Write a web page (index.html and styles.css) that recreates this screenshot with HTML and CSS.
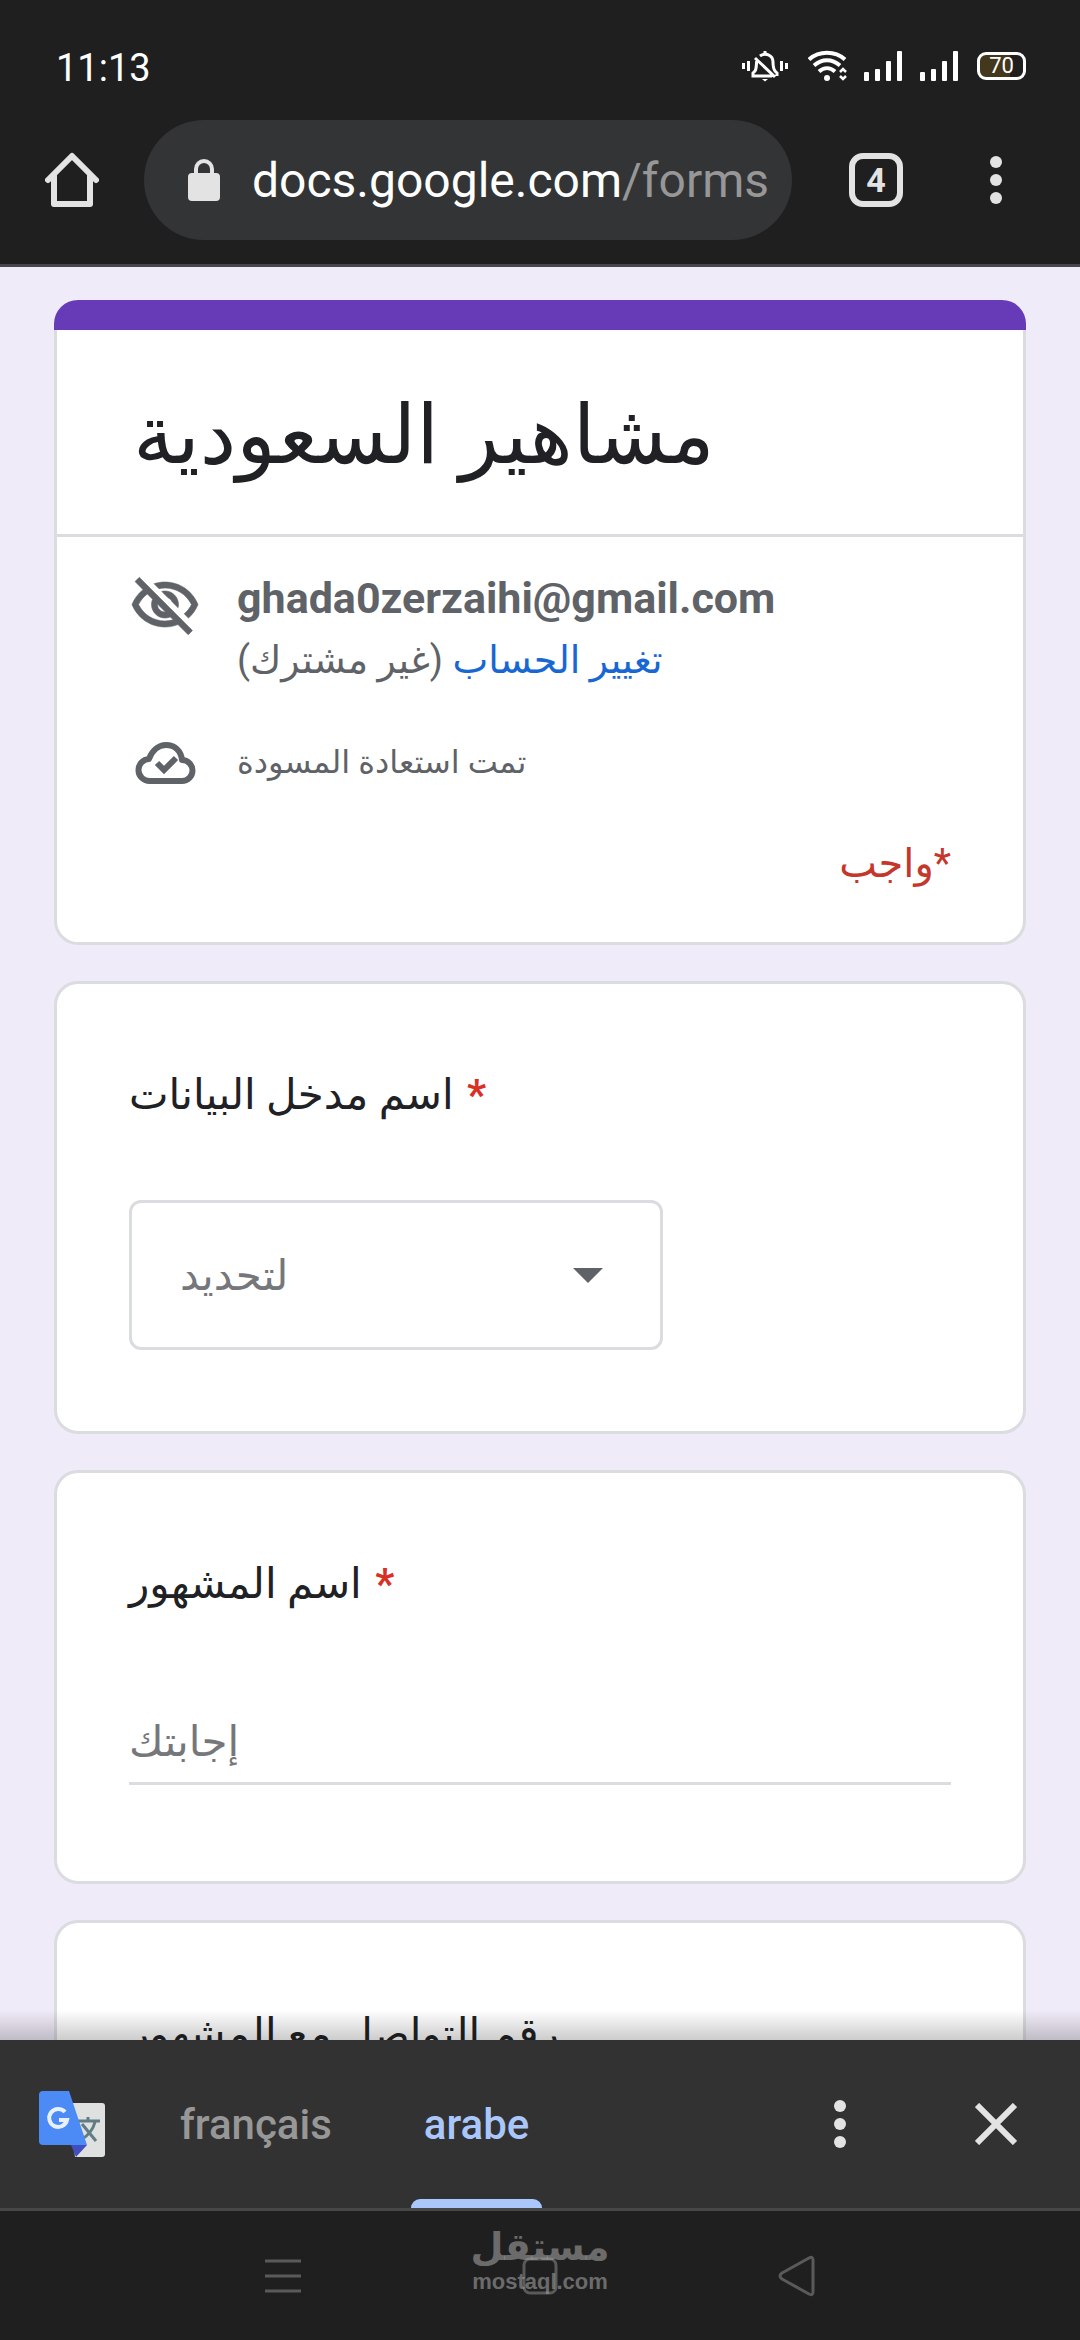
FILE: index.html
```
<!DOCTYPE html>
<html lang="ar">
<head>
    <meta charset="UTF-8">
    <meta name="viewport" content="width=device-width, initial-scale=1.0">
    <title>مشاهير السعودية</title>
    <link rel="stylesheet" href="styles.css">
</head>
<body>
    <header class="browser">
        <div class="status">
            <time class="clock">11:13</time>
            <div class="status-icons">
                <svg class="bell" width="46" height="32" viewBox="0 0 46 32" fill="none" stroke="#fff" stroke-width="3">
                    <path d="M1.500 13v6M6.500 11v10M39.500 11v10M44.500 13v6"/>
                    <path d="M23 1v4M15 9c-1 4 0 9-2 12l-2 2v3h19M18 6c5-4 13-1 13 6 0 4 0 6 2 9l2 2v3M13 8l20 19"/>
                    <path d="M20 29h6l-3 2.500z" fill="#fff" stroke="none"/>
                </svg>
                <svg class="wifi" width="40" height="32" viewBox="0 0 40 32" fill="none" stroke="#fff" stroke-width="4">
                    <path d="M1 9.500c10-9 26-9 36 0M6 15.500c8-7 18-7 26 0M11 21.500c5-4.500 11-4.500 16 0"/>
                    <circle cx="19" cy="28" r="3" fill="#fff" stroke="none"/>
                    <path d="M32 22l3-3 3 3M32 26l3 3 3-3" stroke-width="2.500"/>
                </svg>
                <svg class="signal" width="38" height="32" viewBox="0 0 38 32" fill="#fff">
                    <rect x="0" y="22" width="5" height="9" rx="1"/><rect x="11" y="19" width="5" height="12" rx="1"/><rect x="22" y="11" width="5" height="20" rx="1"/><rect x="33" y="1" width="5" height="30" rx="1"/>
                </svg>
                <svg class="signal" width="38" height="32" viewBox="0 0 38 32" fill="#fff">
                    <rect x="0" y="22" width="5" height="9" rx="1"/><rect x="11" y="19" width="5" height="12" rx="1"/><rect x="22" y="11" width="5" height="20" rx="1"/><rect x="33" y="1" width="5" height="30" rx="1"/>
                </svg>
                <span class="battery">70</span>
            </div>
        </div>
        <div class="toolbar">
            <button class="icon-btn" aria-label="Accueil">
                <svg width="54" height="56" viewBox="0 0 54 56" fill="none" stroke="#e3e3e3" stroke-width="6" stroke-linecap="round" stroke-linejoin="round">
                    <path d="M3 28L27 4l24 24" /><path d="M9 24v28h36V24" />
                </svg>
            </button>
            <a class="url" href="#">
                <svg width="32" height="42" viewBox="0 0 32 42">
                    <rect y="14" width="32" height="28" rx="4" fill="#e3e3e3"/>
                    <path d="M8 16v-6a8 8 0 0 1 16 0v6" fill="none" stroke="#e3e3e3" stroke-width="4"/>
                </svg>
                <span>docs.google.com<span class="url-path">/forms</span></span>
            </a>
            <button class="tabs">4</button>
            <button class="icon-btn" aria-label="Menu">
                <svg width="12" height="48" viewBox="0 0 12 48" fill="#e3e3e3">
                    <circle cx="6" cy="6" r="6"/><circle cx="6" cy="24" r="6"/><circle cx="6" cy="42" r="6"/>
                </svg>
            </button>
        </div>
    </header>

    <main class="page">
        <section class="card intro">
            <h1>مشاهير السعودية</h1>
            <div class="account">
                <svg width="72" height="72" viewBox="0 0 24 24" fill="#5f6368" stroke="#5f6368" stroke-width=".2">
                    <path d="M12 6c3.790 0 7.170 2.130 8.820 5.500-.59 1.220-1.420 2.270-2.410 3.120l1.410 1.410c1.390-1.230 2.490-2.770 3.180-4.530C21.270 7.110 17 4 12 4c-1.270 0-2.490.2-3.640.57l1.650 1.650C10.660 6.090 11.320 6 12 6zm-1.070 1.140L13 9.210c.57.25 1.030.71 1.280 1.280l2.070 2.070c.08-.34.14-.7.14-1.070C16.500 9.010 14.480 7 12 7c-.37 0-.72.05-1.070.14zM2.010 3.870l2.680 2.680C3.060 7.830 1.770 9.530 1 11.500 2.730 15.890 7 19 12 19c1.520 0 2.980-.29 4.320-.82l3.420 3.420 1.410-1.410L3.420 2.450 2.010 3.870zm7.500 7.500l2.610 2.610c-.04.01-.08.02-.12.02-1.380 0-2.500-1.120-2.500-2.500 0-.05.01-.08.01-.13zm-3.400-3.400l1.750 1.750c-.23.55-.36 1.150-.36 1.780 0 2.480 2.020 4.500 4.500 4.500.63 0 1.230-.13 1.770-.36l.98.98c-.88.24-1.800.38-2.750.38-3.790 0-7.170-2.130-8.820-5.500.7-1.430 1.720-2.610 2.930-3.530z"/>
                </svg>
                <div>
                    <strong class="email">ghada0zerzaihi@gmail.com</strong>
                    <p class="switch"><span>(غير مشترك)</span> <a href="#">تغيير الحساب</a></p>
                </div>
            </div>
            <div class="draft">
                <svg width="72" height="72" viewBox="0 0 72 72" fill="none" stroke="#5f6368" stroke-width="6">
                    <path d="M21 55a11 11 0 0 1-1-22c3-8 9-14 17-14 9 0 15 6 16 15a10 10 0 0 1 0 21z" stroke-linejoin="round"/>
                    <path d="M28 37l7 7 12-12"/>
                </svg>
                <span>تمت استعادة المسودة</span>
            </div>
            <p class="required" dir="rtl">*واجب</p>
        </section>

        <section class="card">
            <label class="question" for="entry">اسم مدخل البيانات <span class="star">*</span></label>
            <div class="select">
                <select id="entry">
                    <option>لتحديد</option>
                </select>
                <svg width="30" height="15" viewBox="0 0 30 15"><path d="M0 0h30L15 15z" fill="#5f6368"/></svg>
            </div>
        </section>

        <section class="card">
            <label class="question" for="name">اسم المشهور <span class="star">*</span></label>
            <input class="answer" id="name" type="text" placeholder="إجابتك">
        </section>

        <section class="card">
            <label class="question" for="phone">رقم التواصل مع المشهور</label>
            <input class="answer" id="phone" type="text" placeholder="إجابتك">
        </section>
    </main>

    <div class="translate">
        <svg width="66" height="66" viewBox="0 0 66 66">
            <path d="M30 12h33a3 3 0 0 1 3 3v48a3 3 0 0 1-3 3H36z" fill="#dfe0e0"/>
            <path d="M39 30h22M49 26v4M43 33l14 17M56 31c-2 8-6 13-14 18" fill="none" stroke="#607d83" stroke-width="3"/>
            <path d="M32 54h16L37 66z" fill="#3f4fc0"/>
            <path d="M4 0h26l18 54H4a4 4 0 0 1-4-4V4a4 4 0 0 1 4-4z" fill="#4c8bf5"/>
            <path d="M26 21a9 9 0 1 0 2 8h-8" fill="none" stroke="#e8f0fe" stroke-width="4"/>
        </svg>
        <div class="langs">
            <button class="lang">français</button>
            <button class="lang active">arabe</button>
        </div>
        <button class="icon-btn" aria-label="Options">
            <svg width="12" height="48" viewBox="0 0 12 48" fill="#e3e3e3">
                <circle cx="6" cy="6" r="6"/><circle cx="6" cy="24" r="6"/><circle cx="6" cy="42" r="6"/>
            </svg>
        </button>
        <button class="icon-btn close" aria-label="Fermer">
            <svg width="42" height="42" viewBox="0 0 42 42" stroke="#e3e3e3" stroke-width="6"><path d="M2 2l38 38M40 2L2 40"/></svg>
        </button>
    </div>

    <nav class="navbar">
        <button class="nav-btn" aria-label="Récents">
            <svg width="36" height="36" viewBox="0 0 36 36" stroke="#5a5a5a" stroke-width="3"><path d="M0 3h36M0 18h36M0 33h36"/></svg>
        </button>
        <button class="nav-btn" aria-label="Accueil">
            <svg width="36" height="38" viewBox="0 0 36 38" fill="none" stroke="#5a5a5a" stroke-width="3"><rect x="2" y="2" width="32" height="34" rx="6"/></svg>
        </button>
        <button class="nav-btn" aria-label="Retour">
            <svg width="38" height="42" viewBox="0 0 38 42" fill="none" stroke="#5a5a5a" stroke-width="3" stroke-linejoin="round"><path d="M35 5v32q0 4-4 2L4 24q-4-3 0-6L31 3q4-2 4 2z"/></svg>
        </button>
        <div class="watermark">
            <span class="mark-ar">مستقل</span>
            <span class="mark-url">mostaql.com</span>
        </div>
    </nav>
</body>
</html>
```
FILE: styles.css
```
* {
    box-sizing: border-box;
}
body {
    margin: 0;
    height: 100vh;
    display: flex;
    flex-direction: column;
    overflow: hidden;
    font-family: Roboto, "Noto Sans", "DejaVu Sans", sans-serif;
    background: #f0ebf8;
    color: #202124;
}
button {
    border: 0;
    padding: 0;
    background: none;
    font-family: inherit;
    cursor: pointer;
}
svg {
    display: block;
    flex: none;
}

/* browser bars */
.browser {
    background: #1f1f1f;
    border-bottom: 3px solid #47474a;
    flex: none;
}
.status {
    display: flex;
    justify-content: space-between;
    align-items: flex-start;
    padding: 46px 54px 30px 56px;
}
.clock {
    color: #fff;
    font-size: 38px;
    line-height: 44px;
}
.status-icons {
    display: flex;
    align-items: center;
    height: 40px;
}
.wifi {
    margin-left: 20px;
}
.signal {
    margin-left: 16px;
}
.signal + .signal {
    margin-left: 18px;
}
.battery {
    margin-left: 19px;
    width: 49px;
    height: 28px;
    border: 3px solid #fff;
    border-radius: 9px;
    background: linear-gradient(90deg, #43371c 70%, transparent 70%);
    color: #fff;
    font-size: 22px;
    line-height: 22px;
    text-align: center;
}
.toolbar {
    display: flex;
    align-items: center;
    padding-bottom: 24px;
}
.icon-btn {
    flex: none;
    width: 144px;
    height: 120px;
    display: flex;
    align-items: center;
    justify-content: center;
}
.url {
    flex: 1;
    min-width: 0;
    height: 120px;
    padding: 0 20px 0 44px;
    display: flex;
    align-items: center;
    gap: 32px;
    border-radius: 60px;
    background: #333436;
    color: #fff;
    font-size: 48px;
    text-decoration: none;
    white-space: nowrap;
}
.url-path {
    color: #979797;
}
.tabs {
    flex: none;
    width: 54px;
    height: 54px;
    margin: 0 9px 0 57px;
    border: 6px solid #e3e3e3;
    border-radius: 14px;
    color: #e3e3e3;
    font-size: 34px;
    font-weight: bold;
    line-height: 42px;
}
.toolbar .icon-btn:last-child {
    width: 168px;
}

/* form */
.page {
    flex: 1;
    min-height: 0;
    overflow: hidden;
    padding: 33px 54px 0;
}
.card {
    margin-bottom: 36px;
    padding: 75px 72px 81px;
    background: #fff;
    border: 3px solid #dadce0;
    border-radius: 24px;
}
.intro {
    padding: 0 0 48px;
    border-top: 0;
}
.intro::before {
    content: "";
    display: block;
    height: 30px;
    margin: 0 -3px;
    border-radius: 24px 24px 0 0;
    background: #673ab7;
}
h1 {
    margin: 0;
    padding: 60px 76px 54px;
    border-bottom: 3px solid #dadce0;
    font-size: 82px;
    font-weight: normal;
    line-height: 90px;
}
.account,
.draft {
    display: flex;
    gap: 36px;
    padding: 0 72px;
    color: #5f6368;
}
.account {
    padding-top: 33px;
}
.email {
    display: block;
    font-size: 43px;
    font-weight: bold;
    line-height: 57px;
}
.switch {
    margin: 0;
    font-size: 38px;
    line-height: 66px;
}
.switch a {
    color: #1967d2;
    text-decoration: none;
}
.draft {
    align-items: center;
    padding-top: 33px;
    font-size: 32px;
}
.required {
    margin: 0;
    padding: 36px 72px 0;
    color: #c5362b;
    font-size: 40px;
    line-height: 60px;
}
.question {
    display: block;
    font-size: 42px;
    line-height: 72px;
}
.star {
    margin-left: 3px;
    color: #d93025;
    font-weight: bold;
}
.select {
    width: 534px;
    max-width: 100%;
    margin-top: 69px;
    display: grid;
    align-items: center;
}
.select select,
.select svg {
    grid-area: 1 / 1;
}
.select svg {
    justify-self: end;
    margin-right: 60px;
    pointer-events: none;
}
.select select {
    appearance: none;
    width: 100%;
    height: 150px;
    padding: 0 48px;
    border: 3px solid #dadce0;
    border-radius: 12px;
    background: #fff;
    color: #75777a;
    font-family: inherit;
    font-size: 42px;
}
.answer {
    display: block;
    width: 100%;
    height: 96px;
    margin: 69px 0 15px;
    padding: 12px 0 0;
    border: 0;
    border-bottom: 3px solid #dadce0;
    background: none;
    font-family: inherit;
    font-size: 42px;
}
.answer::placeholder {
    color: #75777a;
    opacity: 1;
}

/* translate bar */
.translate {
    position: relative;
    flex: none;
    height: 171px;
    display: flex;
    align-items: center;
    padding-left: 39px;
    background: #323232;
    border-bottom: 3px solid #474747;
}
.translate::before {
    content: "";
    position: absolute;
    left: 0;
    right: 0;
    bottom: 100%;
    height: 30px;
    background: linear-gradient(transparent, rgba(0, 0, 0, 0.2));
}
.langs {
    flex: 1;
    align-self: stretch;
    display: flex;
    gap: 66px;
    margin-left: 62px;
}
.lang {
    position: relative;
    padding: 0 13px;
    color: #979797;
    font-size: 42px;
    font-weight: 500;
}
.lang.active {
    color: #aac7fb;
}
.lang.active::after {
    content: "";
    position: absolute;
    inset: auto 0 0;
    height: 9px;
    border-radius: 9px 9px 0 0;
    background: #aac7fb;
}
.close {
    width: 168px;
}

/* system navigation */
.navbar {
    position: relative;
    flex: none;
    height: 129px;
    display: flex;
    align-items: center;
    justify-content: center;
    background: #1f1f1f;
}
.nav-btn {
    width: 257px;
    height: 129px;
    display: flex;
    align-items: center;
    justify-content: center;
}
.watermark {
    position: absolute;
    inset: 12px 0 auto;
    display: flex;
    flex-direction: column;
    align-items: center;
    color: rgba(160, 160, 160, 0.6);
    font-weight: bold;
    pointer-events: none;
}
.mark-ar {
    font-size: 38px;
    line-height: 48px;
}
.mark-url {
    font-family: "Liberation Sans", sans-serif;
    font-size: 22px;
    line-height: 22px;
}
```
